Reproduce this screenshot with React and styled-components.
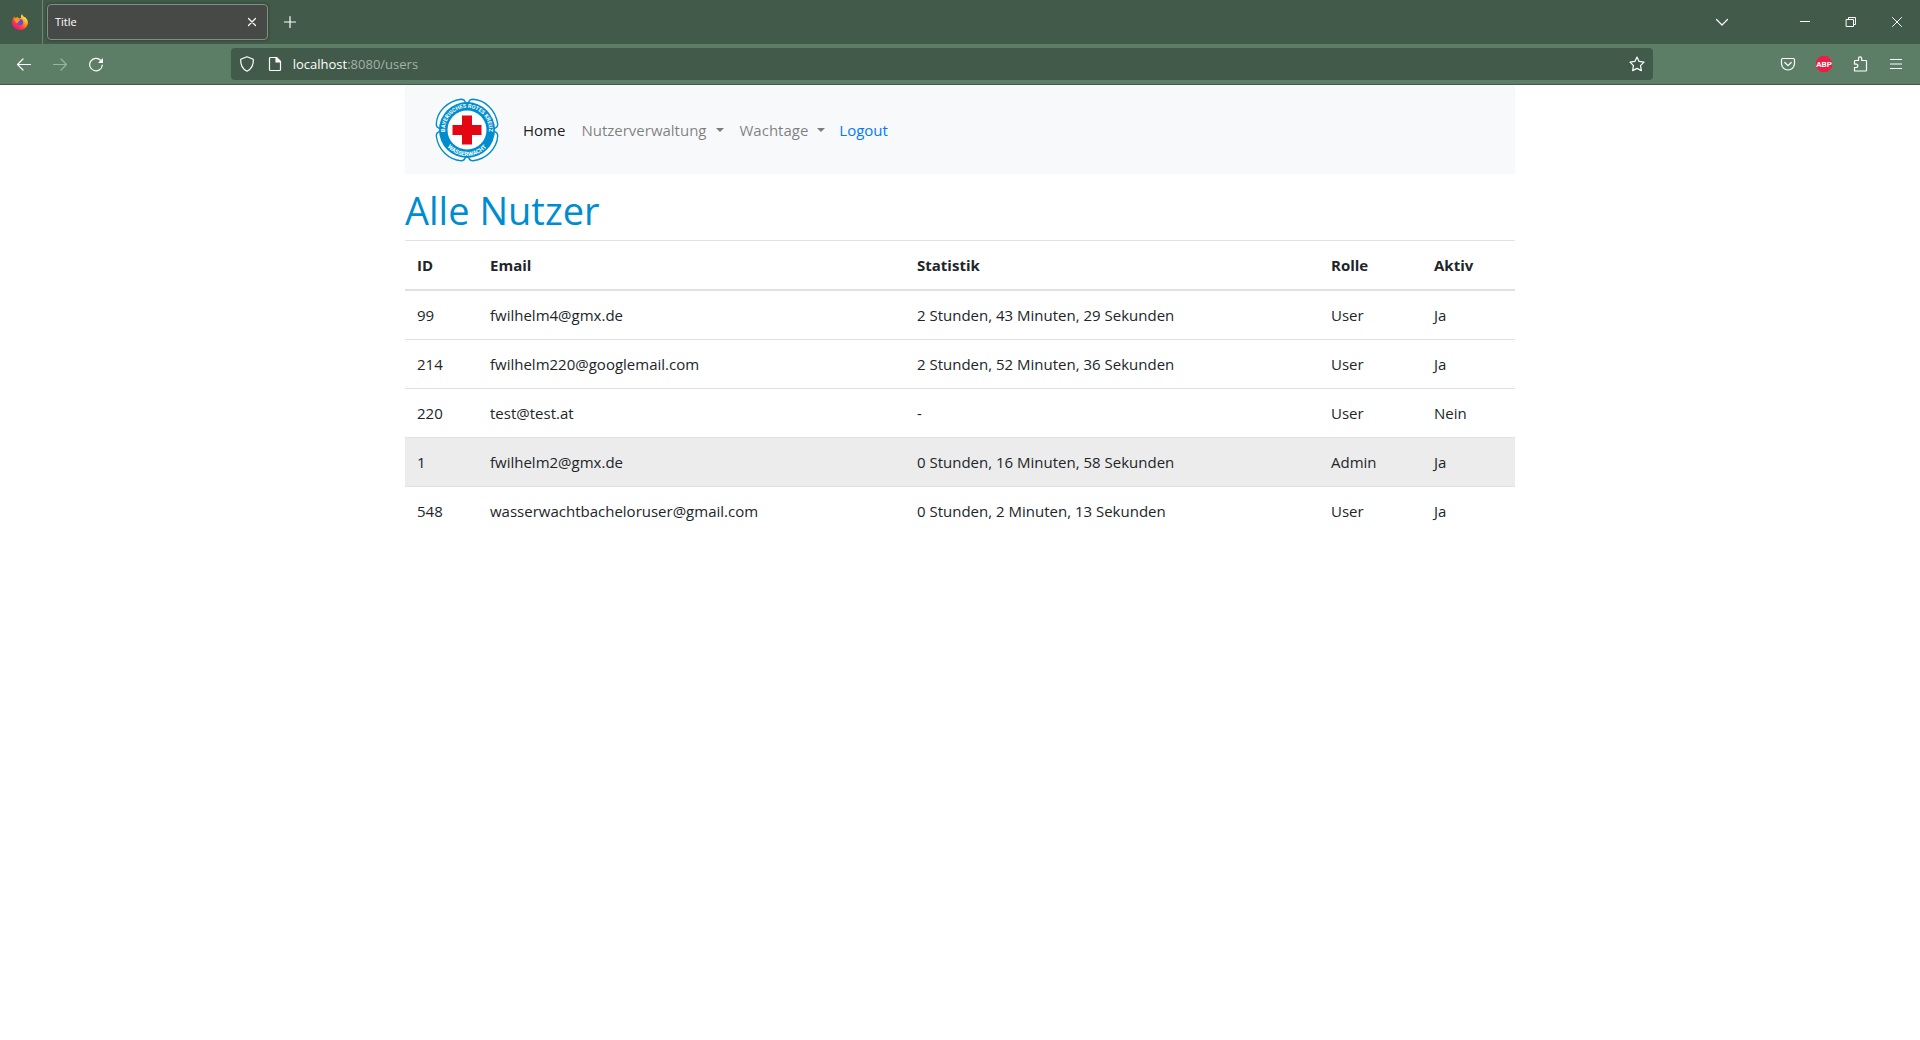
import React from "react";
import styled, { createGlobalStyle, css } from "styled-components";

const GlobalStyle = createGlobalStyle`
  *, *::before, *::after { box-sizing: border-box; }
  body {
    margin: 0;
    background: #fff;
    color: #212529;
    font: 400 15px/24px "Open Sans", "Noto Sans", sans-serif;
  }
  a { text-decoration: none; }
  button { font: inherit; }
`;

const TabStrip = styled.header`
  display: flex;
  align-items: center;
  height: 44px;
  background: #425a49;
  color: #fff;
`;

const FirefoxView = styled.button`
  display: grid;
  place-items: center;
  width: 43px;
  height: 44px;
  padding: 0 2px 0 0;
  border: 0;
  border-right: 1px solid #6f8575;
  background: none;
`;

const Tab = styled.div`
  display: flex;
  align-items: center;
  justify-content: space-between;
  width: 221px;
  height: 36px;
  margin-left: 4px;
  padding: 0 3px 0 7px;
  border: 1px solid #7e9184;
  border-radius: 4px;
  background: #474947;
  box-shadow: 0 0 3px rgba(0, 0, 0, 0.4);
  font-size: 11px;
  line-height: 16px;
`;

const IconButton = styled.button`
  display: grid;
  place-items: center;
  flex: none;
  width: ${(p) => p.$width || 36}px;
  height: ${(p) => p.$height || 32}px;
  padding: 0;
  border: 0;
  background: none;
  color: #fff;
  opacity: ${(p) => (p.$dim ? 0.4 : 1)};
`;

const WindowControls = styled.div`
  display: flex;
  align-items: center;
  margin-left: auto;
`;

const ListTabs = styled(IconButton)`
  margin-right: 42px;
`;

const Toolbar = styled.div`
  display: flex;
  align-items: center;
  height: 41px;
  padding: 0 6px;
  border-bottom: 1px solid #425a49;
  background: #5d7e66;
  color: #fff;
`;

const Spacer = styled.div`
  flex: 117 1 0;
`;

const AddressBar = styled.form`
  display: flex;
  align-items: center;
  flex: 1422 1 0;
  height: 32px;
  padding: 0 2px;
  border-radius: 4px;
  background: #425a49;
`;

const Address = styled.label`
  position: relative;
  flex: 1;
  margin-left: 4px;
  font-size: 13px;
  line-height: 20px;
`;

const AddressInput = styled.input`
  display: block;
  width: 100%;
  padding: 0;
  border: 0;
  outline: 0;
  background: none;
  color: transparent;
  caret-color: #fff;
  font: inherit;
`;

const AddressText = styled.span`
  position: absolute;
  inset: 0;
  pointer-events: none;
  color: #a3b3a7;

  b {
    font-weight: 400;
    color: #fff;
  }
`;

const Container = styled.main`
  max-width: 1140px;
  margin: 0 auto;
  padding: 0 15px;
`;

const Navbar = styled.nav`
  display: flex;
  align-items: center;
  padding: 13px 16px 12px 30px;
  background: #f8f9fa;
`;

const Brand = styled.a`
  display: block;
  height: 64px;
  margin-right: 16px;
`;

const NavLink = styled.a`
  padding: 8px;
  color: ${(p) => (p.$active ? "rgba(0, 0, 0, 0.9)" : "rgba(0, 0, 0, 0.5)")};

  ${(p) =>
    p.$dropdown &&
    css`
      &::after {
        content: "";
        display: inline-block;
        margin-left: 9px;
        vertical-align: 4px;
        border: 4px solid transparent;
        border-top-color: currentColor;
        border-bottom: 0;
      }
    `}
`;

const Logout = styled.a`
  margin-left: 6px;
  color: #007bff;
`;

const Heading = styled.h1`
  margin: 12px 0 6px;
  color: #008dcf;
  font-size: 38px;
  font-weight: 400;
  line-height: 48px;
`;

const Table = styled.table`
  width: 100%;
  table-layout: fixed;
  border-collapse: collapse;
  text-align: left;
`;

const Col = styled.col`
  width: ${(p) => p.$width}px;
`;

const HeadCell = styled.th`
  padding: 12px;
  border-top: 1px solid #dee2e6;
  border-bottom: 2px solid #dee2e6;
  font-weight: 700;
`;

const Row = styled.tr`
  background: ${(p) => (p.$highlighted ? "#ececec" : "transparent")};
`;

const Cell = styled.td`
  padding: 12px;
  border-top: 1px solid #dee2e6;
`;

const Icon = ({ size = 16, children, ...rest }) => (
  <svg
    width={size}
    height={size}
    viewBox={`0 0 ${size} ${size}`}
    fill="none"
    stroke="currentColor"
    strokeWidth="1.2"
    strokeLinecap="round"
    strokeLinejoin="round"
    aria-hidden="true"
    {...rest}
  >
    {children}
  </svg>
);

const FirefoxLogo = () => (
  <svg width="16" height="16" viewBox="0 0 16 16" aria-hidden="true">
    <defs>
      <linearGradient id="flame" x1="0.85" y1="0.1" x2="0.2" y2="0.95">
        <stop offset="0" stopColor="#fff44f" />
        <stop offset="0.4" stopColor="#ff980e" />
        <stop offset="0.7" stopColor="#ff3647" />
        <stop offset="1" stopColor="#e31587" />
      </linearGradient>
    </defs>
    <path
      fill="url(#flame)"
      d="M10 0c.3 1.600 1.400 2.300 2.300 3.200.5-.2.800-.1 1.200.3C15 5 16 6.800 15.900 8.700 15.700 12.700 12.300 16 8 16S.2 12.700.1 8.600C0 6.300.9 4.200 2.400 2.600l.5 1.500c.8-.6 1.800-.9 2.900-.8L7 4.600 9.100 4C8.800 2.400 9.100 1 10 0z"
    />
    <circle cx="8" cy="8.200" r="3.200" fill="#7542e5" />
    <path fill="#ff980e" d="M2.600 4.400c1.600-.8 3.400-.3 4.100.8l1.900.4c0 .9-1.700 1.300-2 1.800-.3.800-.3 1.400-1.500 1.900C3.500 8.500 2.400 6.500 2.600 4.400z" />
  </svg>
);

const WasserwachtLogo = () => (
  <svg width="64" height="64" viewBox="0 0 64 64" role="img" aria-label="Bayerisches Rotes Kreuz Wasserwacht">
    <defs>
      <path id="ringTop" d="M10.400 36 A22 22 0 1 1 53.600 36" />
      <path id="ringBottom" d="M6.300 36 A26 26 0 0 0 57.700 36" />
    </defs>
    {[0, 90, 180, 270].map((angle) => (
      <path
        key={angle}
        d="M33.500 5 C34 2.500 35.500 1.300 38 1.300 C50 2 60.800 12 62.700 26 C62.700 28.500 61.500 30 59 30.500 L32 32 Z"
        transform={`rotate(${angle} 32 32)`}
        fill="#fff"
        stroke="#008dcf"
        strokeWidth="1.400"
      />
    ))}
    <circle cx="32" cy="32" r="28" fill="#008dcf" />
    <circle cx="32" cy="32" r="19.500" fill="#fff" />
    <path fill="#e30613" d="M27 17.500h10V27h9.500v10H37v9.500H27V37h-9.500V27H27z" />
    <g fill="#fff" fontFamily="Roboto, sans-serif" fontWeight="700" textAnchor="middle">
      <text fontSize="5.500">
        <textPath href="#ringTop" startOffset="50%">BAYERISCHES ROTES KREUZ</textPath>
      </text>
      <text fontSize="6">
        <textPath href="#ringBottom" startOffset="50%">WASSERWACHT</textPath>
      </text>
    </g>
  </svg>
);

const users = [
  { id: 99, email: "fwilhelm4@gmx.de", stats: "2 Stunden, 43 Minuten, 29 Sekunden", role: "User", active: "Ja" },
  { id: 214, email: "fwilhelm220@googlemail.com", stats: "2 Stunden, 52 Minuten, 36 Sekunden", role: "User", active: "Ja" },
  { id: 220, email: "test@test.at", stats: "-", role: "User", active: "Nein" },
  { id: 1, email: "fwilhelm2@gmx.de", stats: "0 Stunden, 16 Minuten, 58 Sekunden", role: "Admin", active: "Ja", highlighted: true },
  { id: 548, email: "wasserwachtbacheloruser@gmail.com", stats: "0 Stunden, 2 Minuten, 13 Sekunden", role: "User", active: "Ja" },
];

const columns = [
  { label: "ID", width: 73 },
  { label: "Email", width: 427 },
  { label: "Statistik", width: 414 },
  { label: "Rolle", width: 103 },
  { label: "Aktiv", width: 93 },
];

const BrowserTabs = () => (
  <TabStrip>
    <FirefoxView aria-label="Firefox View">
      <FirefoxLogo />
    </FirefoxView>
    <Tab>
      Title
      <IconButton $width={24} $height={24} aria-label="Close tab">
        <Icon><path d="M4.500 4.500l7 7M11.500 4.500l-7 7" /></Icon>
      </IconButton>
    </Tab>
    <IconButton $width={44} aria-label="New tab">
      <Icon><path d="M8 2.500v11M2.500 8h11" /></Icon>
    </IconButton>
    <WindowControls>
      <ListTabs aria-label="List all tabs">
        <Icon><path d="M2.500 5.500L8 11l5.500-5.500" /></Icon>
      </ListTabs>
      <IconButton $width={46} aria-label="Minimize">
        <Icon strokeWidth="1" strokeLinecap="butt"><path d="M3 7.500h10" /></Icon>
      </IconButton>
      <IconButton $width={46} aria-label="Restore">
        <Icon strokeWidth="1" strokeLinejoin="miter"><path d="M3.500 5.500h7v7h-7zM5.500 5.500v-2h7v7h-2" /></Icon>
      </IconButton>
      <IconButton $width={46} aria-label="Close">
        <Icon strokeWidth="1"><path d="M3.500 3.500l9 9M12.500 3.500l-9 9" /></Icon>
      </IconButton>
    </WindowControls>
  </TabStrip>
);

const BrowserToolbar = () => (
  <Toolbar>
    <IconButton aria-label="Back">
      <Icon><path d="M14.500 8.500H1.500M7 3L1.500 8.500 7 14" /></Icon>
    </IconButton>
    <IconButton $dim disabled aria-label="Forward">
      <Icon><path d="M1.500 8.500h13M9 3l5.500 5.500L9 14" /></Icon>
    </IconButton>
    <IconButton aria-label="Reload">
      <Icon>
        <path d="M12.800 4.500A6.300 6.300 0 1 0 14.300 9" />
        <path d="M15 2v5H10z" fill="currentColor" stroke="none" />
      </Icon>
    </IconButton>
    <Spacer />
    <AddressBar>
      <IconButton type="button" $width={28} aria-label="Tracking protection">
        <Icon><path d="M8 .8l6.300 2.500c.3 5-1.600 9.700-6.300 11.900C3.300 13 1.400 8.300 1.700 3.300z" /></Icon>
      </IconButton>
      <IconButton type="button" $width={28} aria-label="Site information">
        <Icon>
          <path d="M3.500 1.500h6l4 4v8a1 1 0 0 1-1 1h-9a1 1 0 0 1-1-1v-11a1 1 0 0 1 1-1z" />
          <path d="M9 1.500v4.500h4.500z" fill="currentColor" />
        </Icon>
      </IconButton>
      <Address>
        <AddressInput aria-label="Address" defaultValue="localhost:8080/users" />
        <AddressText aria-hidden="true"><b>localhost</b>:8080/users</AddressText>
      </Address>
      <IconButton type="button" $width={28} aria-label="Bookmark this page">
        <Icon><path d="M8 1l2.100 4.400 4.900.7-3.500 3.500.9 5L8 12.400l-4.400 2.200.9-5L1 6.100l4.900-.7z" /></Icon>
      </IconButton>
    </AddressBar>
    <Spacer />
    <IconButton aria-label="Save to Pocket">
      <Icon>
        <path d="M2.800 2.500h10.400a1.300 1.300 0 0 1 1.300 1.300V7.500a6.500 6.500 0 0 1-13 0V3.800a1.300 1.300 0 0 1 1.300-1.300z" />
        <path d="M4.800 6.500L8 9.600l3.200-3.100" />
      </Icon>
    </IconButton>
    <IconButton aria-label="Adblock Plus">
      <Icon stroke="none">
        <path fill="#ed1e45" d="M4.700 0h6.600L16 4.700v6.600L11.300 16H4.700L0 11.300V4.700z" />
        <text x="8" y="11" fill="#fff" fontFamily="Roboto, sans-serif" fontWeight="700" fontSize="8" textAnchor="middle">ABP</text>
      </Icon>
    </IconButton>
    <IconButton aria-label="Extensions">
      <Icon><path d="M2.500 15v-3.500h1.700a1.700 1.700 0 0 0 0-3.400H2.500V5.300a.8.800 0 0 1 .8-.8H6.500V2.500a1.600 1.600 0 0 1 3.200 0v2h4a.8.800 0 0 1 .8.800V14.200a.8.800 0 0 1-.8.800z" /></Icon>
    </IconButton>
    <IconButton aria-label="Menu">
      <Icon><path d="M2.500 3.500h11M2.500 8h11M2.500 12.500h11" /></Icon>
    </IconButton>
  </Toolbar>
);

export default function App() {
  return (
    <>
      <GlobalStyle />
      <BrowserTabs />
      <BrowserToolbar />
      <Container>
        <Navbar>
          <Brand href="#home"><WasserwachtLogo /></Brand>
          <NavLink href="#home" $active>Home</NavLink>
          <NavLink href="#nutzer" $dropdown>Nutzerverwaltung</NavLink>
          <NavLink href="#wachtage" $dropdown>Wachtage</NavLink>
          <Logout href="#logout">Logout</Logout>
        </Navbar>
        <Heading>Alle Nutzer</Heading>
        <Table>
          <colgroup>
            {columns.map((c) => <Col key={c.label} $width={c.width} />)}
          </colgroup>
          <thead>
            <tr>
              {columns.map((c) => <HeadCell key={c.label} scope="col">{c.label}</HeadCell>)}
            </tr>
          </thead>
          <tbody>
            {users.map((u) => (
              <Row key={u.id} $highlighted={u.highlighted}>
                <Cell>{u.id}</Cell>
                <Cell>{u.email}</Cell>
                <Cell>{u.stats}</Cell>
                <Cell>{u.role}</Cell>
                <Cell>{u.active}</Cell>
              </Row>
            ))}
          </tbody>
        </Table>
      </Container>
    </>
  );
}
